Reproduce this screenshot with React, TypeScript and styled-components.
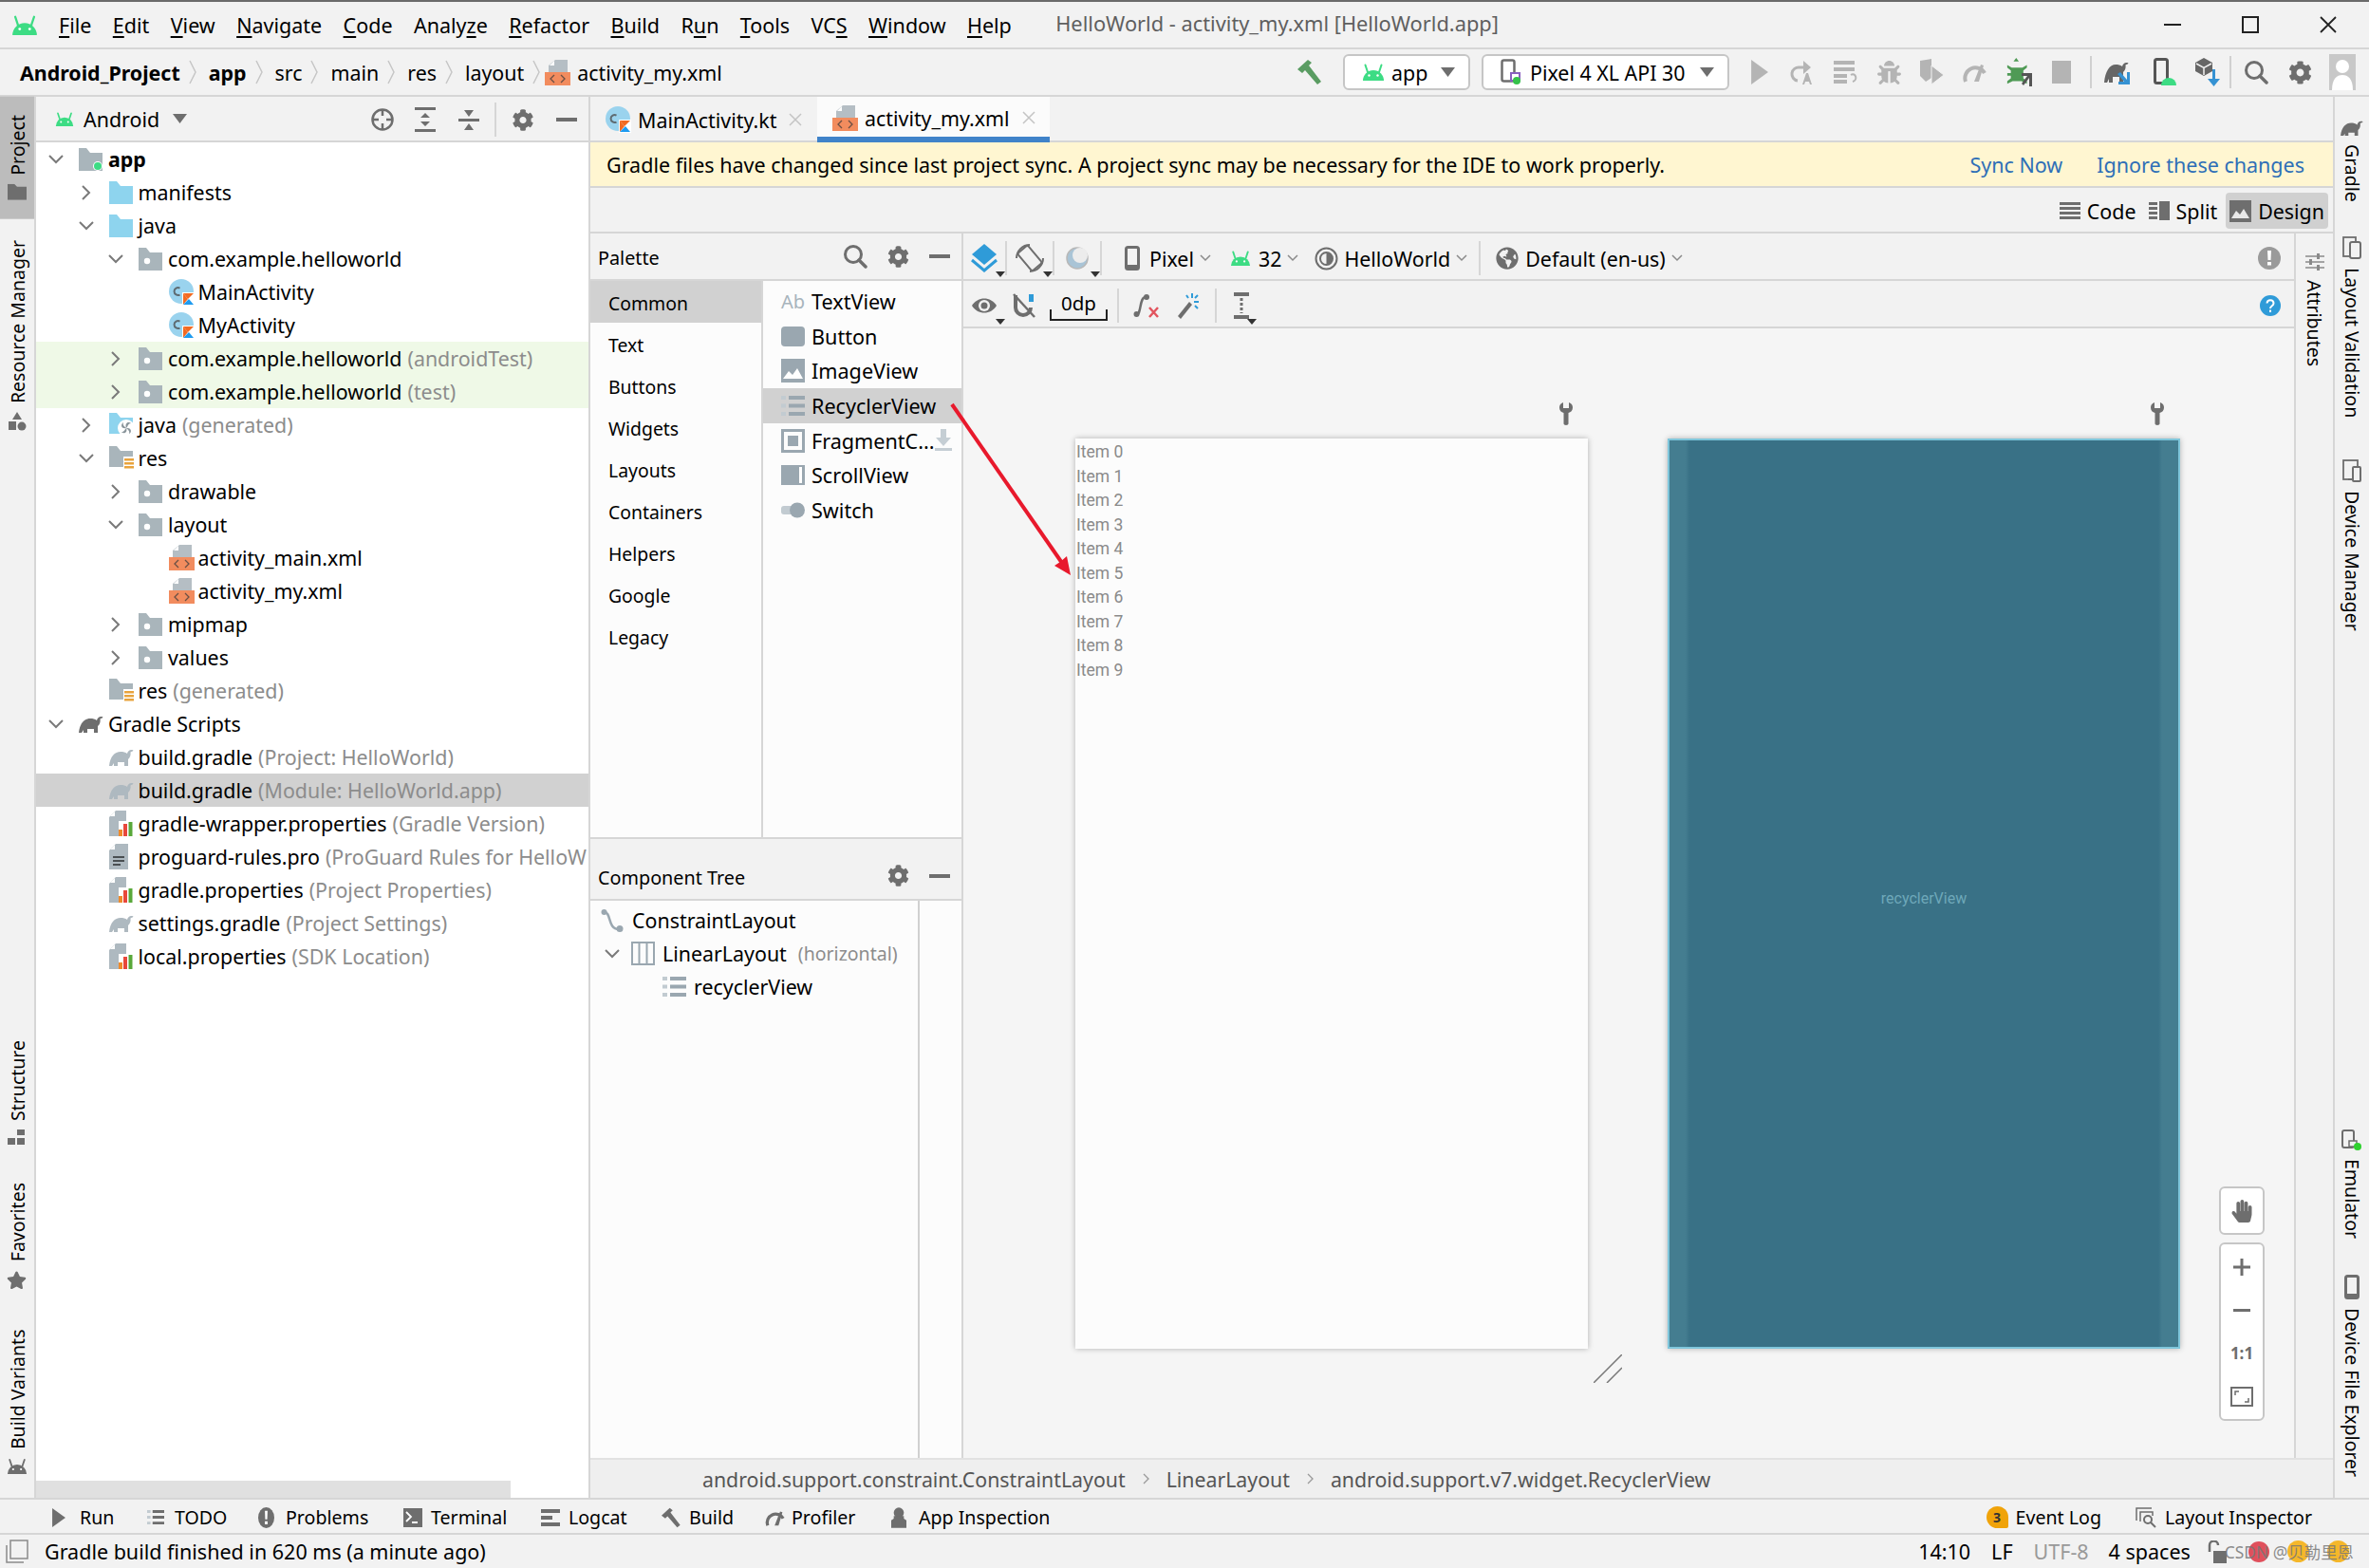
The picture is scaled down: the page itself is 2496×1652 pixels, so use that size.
import React from 'react';
import styled, { createGlobalStyle } from 'styled-components';
import { FaCog, FaStar, FaHandPaper, FaGlobeAmericas, FaBug } from 'react-icons/fa';

const FONT = '"Noto Sans", "Noto Sans CJK SC", sans-serif';

const GlobalStyle = createGlobalStyle`
  html, body {
    margin: 0;
    padding: 0;
    width: 2496px;
    height: 1652px;
    overflow: hidden;
    background: #f2f2f2;
    font-family: ${FONT};
    color: #000;
  }
  * { box-sizing: border-box; }
  svg { display: block; flex: none; }
`;

const GRAY = '#6e6e6e';
const LIGHT = '#a9b5bb';
const GREEN = '#3ddc84';

type IconProps = { c?: string; s?: number };

const Android = ({ c = GREEN, s = 24 }: IconProps) => (
  <svg width={s} height={s * 0.75} viewBox="0 0 24 18">
    <path d="M1 18a11 11 0 0 1 22 0z" fill={c} />
    <path d="M6 9 3.5 1.5M18 9l2.500-7.500" stroke={c} strokeWidth="2" strokeLinecap="round" />
    <circle cx="7.500" cy="12.500" r="1.200" fill="#fff" />
    <circle cx="16.500" cy="12.500" r="1.200" fill="#fff" />
  </svg>
);

const Elephant = ({ c = GRAY, s = 26 }: IconProps) => (
  <svg width={s} height={s * 0.77} viewBox="0 0 26 20">
    <path d="M0 20C1 10 6 5 12 5c3 0 5 .5 7 2 .5-3 3.500-5 6.500-3.500-.5 1.500-2 1-3 2 .5 3-.5 6-2.500 7.500V20h-4v-4H9v4H5v-3l-2 3z" fill={c} />
  </svg>
);

const FolderIcon = ({ c = LIGHT, dot, w = 25 }: { c?: string; dot?: boolean; w?: number }) => (
  <svg width={w} height={w * 0.96} viewBox="0 0 25 24">
    <path d="M0 0h8l4 5h13v19H0z" fill={c} />
    {dot && <circle cx="9" cy="14" r="3.200" fill="#fff" />}
  </svg>
);

const ModuleFolder = () => (
  <svg width="25" height="24" viewBox="0 0 25 24">
    <path d="M0 0h8l4 5h13v19H0z" fill={LIGHT} />
    <circle cx="20" cy="19" r="5" fill="#fff" />
    <circle cx="20" cy="19" r="4" fill={GREEN} />
  </svg>
);

const ResFolder = () => (
  <svg width="27" height="25" viewBox="0 0 27 25">
    <path d="M0 0h8l4 5h13v17H0z" fill={LIGHT} />
    <path d="M15 11h12v14H15z" fill="#fff" />
    <path d="M16 13h10v2.500H16zM16 17h10v2.500H16zM16 21h10v2.500H16z" fill="#e8a33d" />
  </svg>
);

const GenFolder = () => (
  <svg width="27" height="25" viewBox="0 0 27 25">
    <path d="M0 0h8l4 5h13v17H0z" fill="#8ed4ee" />
    <circle cx="18" cy="16" r="9" fill="#fff" />
    <path d="M18 16c-2-6 3-7 5-5-3 0-3 3-5 5zm0 0c6-1 6 5 3 6 1-3-1-4-3-6zm0 0c2 6-4 6-5 4 3 0 3-2 5-4zm0 0c-6 1-6-4-3-6-1 3 1 4 3 6z" fill="#8a959b" />
  </svg>
);

const KotlinClass = () => (
  <svg width="27" height="28" viewBox="0 0 27 28">
    <circle cx="13" cy="13" r="13" fill="#9ad3ee" />
    <path d="M11.500 9.500a4 4 0 1 0 0 7" fill="none" stroke="#5e6b72" strokeWidth="2" />
    <path d="M14 14h13v14H14z" fill="#fff" />
    <path d="M15 15h11l-6 6z" fill="#f26a22" />
    <path d="M15 15v12l5-6z" fill="#f26a22" />
    <path d="M15 27l6-6 5 6z" fill="#1e9bf0" />
  </svg>
);

const XmlFile = () => (
  <svg width="27" height="27" viewBox="0 0 27 27">
    <path d="M11 0h13v14H4V6z" fill="#b5bec4" />
    <path d="M10 1v5H5z" fill="#fff" />
    <path d="M0 13h27v14H0z" fill="#f28c5e" />
    <path d="M10 16l-4 4 4 4M17 16l4 4-4 4" fill="none" stroke="#6b5045" strokeWidth="1.300" />
  </svg>
);

const PropsFile = () => (
  <svg width="25" height="27" viewBox="0 0 25 27">
    <path d="M7 0h11v27H0V7z" fill="#aeb9c0" />
    <path d="M6 1v5H1z" fill="#fff" />
    <path d="M10 11h15v16H10z" fill="#fff" />
    <path d="M10 20h4v7h-4z" fill="#ef8a2a" />
    <path d="M15 14h4v13h-4z" fill="#e8483b" />
    <path d="M20.500 12h4v15h-4z" fill="#59a83a" />
  </svg>
);

const TextFile = () => (
  <svg width="20" height="27" viewBox="0 0 20 27">
    <path d="M7 0h13v27H0V7z" fill="#aeb9c0" />
    <path d="M6 1v5H1z" fill="#fff" />
    <path d="M4 13h12v2H4zM4 17h12v2H4zM4 21h8v2H4z" fill="#4a4f52" />
  </svg>
);

const ListIcon = ({ c = '#9aa7b0', w = 25 }: IconProps & { w?: number }) => (
  <svg width={w} height={w * 0.86} viewBox="0 0 25 21.500">
    <path d="M0 0h5v4H0zM0 8.500h5v4H0zM0 17h5v4H0z" fill="#c2cbd1" />
    <path d="M8 0h17v4H8zM8 8.500h17v4H8zM8 17h17v4H8z" fill={c} />
  </svg>
);

const Gear = ({ s = 23 }: IconProps) => <FaCog size={s} color={GRAY} />;

const Search = () => (
  <svg width="26" height="26" viewBox="0 0 26 26">
    <circle cx="11" cy="11" r="8.500" fill="none" stroke={GRAY} strokeWidth="3" />
    <path d="M17 17l7 7" stroke={GRAY} strokeWidth="3.500" strokeLinecap="round" />
  </svg>
);

const Minus = () => (
  <svg width="22" height="4" viewBox="0 0 22 4">
    <path d="M0 0h22v4H0z" fill={GRAY} />
  </svg>
);

const Chevron = ({ down }: { down?: boolean }) => (
  <svg width="18" height="18" viewBox="0 0 18 18">
    <path d={down ? 'M2 5l7 7 7-7' : 'M5 2l7 7-7 7'} fill="none" stroke="#7a7a7a" strokeWidth="2" />
  </svg>
);

const SmallChevron = () => (
  <svg width="12" height="8" viewBox="0 0 12 8">
    <path d="M1 1l5 5 5-5" fill="none" stroke="#8a8a8a" strokeWidth="1.500" />
  </svg>
);

const ComboCaret = () => (
  <svg width="15" height="10" viewBox="0 0 15 10">
    <path d="M0 0h15l-7.500 10z" fill={GRAY} />
  </svg>
);

const Crumb = () => (
  <svg width="9" height="26" viewBox="0 0 9 26">
    <path d="M1 1l6 12-6 12" fill="none" stroke="#c6c6c6" strokeWidth="1.500" />
  </svg>
);

const Hammer = () => (
  <svg width="28" height="26" viewBox="0 0 28 26">
    <path d="M0 10 11 0l4 3-3 3 13 17-4 3L8 11l-3 3z" fill="#5a9c62" />
  </svg>
);

const PhoneIcon = ({ c = GRAY }: IconProps) => (
  <svg width="16" height="26" viewBox="0 0 16 26">
    <rect x="1.500" y="1.500" width="13" height="23" rx="2" fill="none" stroke={c} strokeWidth="3" />
    <path d="M1 20h14v5H1z" fill={c} />
  </svg>
);

const Warn = ({ c, w = 24, h = 24 }: { c: string; w?: number; h?: number }) => (
  <svg width={w} height={h} viewBox="0 0 24 24" preserveAspectRatio="none">
    <circle cx="12" cy="12" r="12" fill={c} />
    <path d="M10 4h4l-.5 10h-3zM10 16h4v3.500h-4z" fill="#fff" />
  </svg>
);

const Help = () => (
  <svg width="22" height="22" viewBox="0 0 22 22">
    <circle cx="11" cy="11" r="11" fill="#2f9bd8" />
    <path d="M7.500 8.500C8 4 14.500 4.500 14.500 8.500c0 3-3.500 2.500-3.500 5.500" fill="none" stroke="#fff" strokeWidth="2" />
    <path d="M10 15.500h2v2.500h-2z" fill="#fff" />
  </svg>
);

const Wrench = () => (
  <svg width="14" height="24" viewBox="0 0 14 24">
    <path d="M4 0v6h6V0c3 1 4 3 4 5.500 0 3-2 5-4.500 5.500v11.500a2.500 1.500 0 0 1-5 0V11C2 10.500 0 8.500 0 5.500 0 3 1 1 4 0z" fill={GRAY} />
  </svg>
);

const TopBar = styled.div`
  height: 52px;
  display: flex;
  align-items: center;
  border-top: 2px solid #6b6b6b;
  border-bottom: 2px solid #d6d6d6;
  background: #f2f2f2;
`;

const AppLogo = styled.div`
  width: 62px;
  padding-left: 12px;
`;

const MenuItem = styled.span`
  font-size: 21.500px;
  margin-right: 22.400px;
  u {
    text-underline-offset: 3px;
  }
`;

const WindowTitle = styled.span`
  font-size: 21.800px;
  color: #5f5f5f;
  margin-left: 24px;
  margin-bottom: 3px;
`;

const WindowButtons = styled.div`
  margin-left: auto;
  display: flex;
  align-items: center;
  gap: 64px;
  padding-right: 34px;
`;

const NavBar = styled.div`
  height: 50px;
  display: flex;
  align-items: center;
  border-bottom: 2px solid #d6d6d6;
  padding: 0 3px 0 21px;
  font-size: 21.400px;
`;

const NavCrumb = styled.span<{ $bold?: boolean }>`
  font-weight: ${(p) => (p.$bold ? 700 : 400)};
`;

const NavSep = styled.span`
  margin: 0 12px 0 9px;
`;

const NavFile = styled.span`
  margin-left: 7px;
`;

const NavIconSlot = styled.div`
  margin-left: -8px;
`;

const NavRight = styled.div`
  margin-left: auto;
  display: flex;
  align-items: center;
`;

const Combo = styled.div<{ $w: number; $mr: number }>`
  width: ${(p) => p.$w}px;
  height: 38px;
  margin-right: ${(p) => p.$mr}px;
  display: flex;
  align-items: center;
  background: #fff;
  border: 2px solid #c6c6c6;
  border-radius: 6px;
  padding: 0 14px 0 18px;
  font-size: 21.400px;
  gap: 7px;
  svg:last-child {
    margin-left: auto;
  }
`;

const HammerSlot = styled.div`
  margin-right: 20px;
`;

const ActionSlot = styled.div<{ $w?: number }>`
  width: ${(p) => p.$w ?? 45.500}px;
  display: flex;
  justify-content: center;
  align-items: center;
`;

const ActionSep = styled.div<{ $ml?: number }>`
  width: 2px;
  height: 34px;
  margin-left: ${(p) => p.$ml ?? 0}px;
  background: #d0d0d0;
`;

const Middle = styled.div`
  height: 1476px;
  display: flex;
`;

const StripeLeft = styled.div`
  width: 38px;
  display: flex;
  flex-direction: column;
  border-right: 2px solid #d6d6d6;
  background: #f2f2f2;
`;

const StripeRight = styled.div`
  width: 38px;
  display: flex;
  flex-direction: column;
  border-left: 2px solid #d6d6d6;
  background: #f2f2f2;
`;

const StripeButton = styled.div<{ $active?: boolean; $flip?: boolean; $mt?: number; $pad?: string }>`
  writing-mode: vertical-rl;
  transform: ${(p) => (p.$flip ? 'rotate(180deg)' : 'none')};
  display: flex;
  align-items: center;
  gap: 9px;
  width: 36px;
  margin-top: ${(p) => p.$mt ?? 0}px;
  padding: ${(p) => p.$pad ?? '0'};
  font-size: 19.500px;
  white-space: nowrap;
  background: ${(p) => (p.$active ? '#bcbcbc' : 'transparent')};
`;

const StripeIcon = styled.div<{ $flip?: boolean }>`
  transform: ${(p) => (p.$flip ? 'rotate(180deg)' : 'none')};
`;

const ProjectPanel = styled.div`
  width: 582px;
  display: flex;
  flex-direction: column;
  position: relative;
  background: #fff;
  overflow: hidden;
`;

const PanelHeader = styled.div`
  height: 48px;
  display: flex;
  align-items: center;
  background: #f2f2f2;
  border-bottom: 2px solid #d6d6d6;
  font-size: 21.400px;
  flex: none;
`;

const HeaderLabel = styled.span<{ $ml?: number }>`
  margin-left: ${(p) => p.$ml ?? 10}px;
`;

const HeaderIcon = styled.div<{ $x: number }>`
  position: absolute;
  left: ${(p) => p.$x}px;
  top: 12px;
  height: 24px;
  display: flex;
  align-items: center;
  transform: translateX(-50%);
`;

const Row = styled.div<{ $level: number; $bg?: string }>`
  height: 35px;
  display: flex;
  align-items: center;
  padding-left: ${(p) => 9 + p.$level * 31.5}px;
  background: ${(p) => p.$bg ?? 'transparent'};
  font-size: 21.400px;
  white-space: nowrap;
  flex: none;
`;

const ChevronSlot = styled.div`
  width: 36px;
  padding-left: 3px;
  flex: none;
`;

const IconSlot = styled.div`
  width: 31px;
  display: flex;
  align-items: center;
  flex: none;
`;

const Detail = styled.span<{ $c?: string }>`
  color: ${(p) => p.$c ?? '#8c8c8c'};
  margin-left: 6px;
`;

const ProjectScroll = styled.div`
  position: absolute;
  left: 0;
  bottom: 0;
  width: 500px;
  height: 18px;
  background: #e0e0e0;
`;

const Editor = styled.div`
  flex: 1;
  display: flex;
  flex-direction: column;
  border-left: 2px solid #d6d6d6;
  min-width: 0;
`;

const TabBar = styled.div`
  height: 48px;
  display: flex;
  border-bottom: 2px solid #d6d6d6;
  font-size: 21.400px;
  flex: none;
`;

const Tab = styled.div<{ $active?: boolean; $w: number }>`
  width: ${(p) => p.$w}px;
  display: flex;
  align-items: center;
  height: 48px;
  padding: ${(p) => (p.$active ? '2px' : '0')} 0 0 16px;
  gap: 7px;
  background: ${(p) => (p.$active ? '#fbfbfb' : 'transparent')};
  border-bottom: ${(p) => (p.$active ? '6px solid #4083c9' : 'none')};
`;

const TabClose = styled.span`
  margin-left: 6px;
  display: flex;
`;

const Banner = styled.div`
  height: 48px;
  display: flex;
  align-items: center;
  background: #fff6d1;
  border-bottom: 2px solid #d6d6d6;
  padding: 0 30px 0 17px;
  font-size: 21.500px;
  flex: none;
`;

const BannerLink = styled.span<{ $first?: boolean }>`
  color: #2e6fb7;
  margin-left: ${(p) => (p.$first ? 'auto' : '36px')};
`;

const ModeBar = styled.div`
  height: 48px;
  display: flex;
  align-items: center;
  justify-content: flex-end;
  border-bottom: 2px solid #d6d6d6;
  padding: 2px 5px 0 0;
  font-size: 21.400px;
  flex: none;
`;

const ModeButton = styled.div<{ $active?: boolean }>`
  display: flex;
  align-items: center;
  height: 38px;
  gap: 7px;
  padding: 0 4px;
  margin-left: 5px;
  border-radius: 4px;
  background: ${(p) => (p.$active ? '#d0d0d0' : 'transparent')};
`;

const Body = styled.div`
  flex: 1;
  display: flex;
  min-height: 0;
`;

const SideColumn = styled.div`
  width: 393px;
  display: flex;
  flex-direction: column;
  border-right: 2px solid #d6d6d6;
  flex: none;
`;

const SideHeader = styled.div<{ $h: number }>`
  height: ${(p) => p.$h}px;
  display: flex;
  align-items: center;
  padding: 3px 12px 0 8px;
  font-size: 19.800px;
  border-bottom: 2px solid #d6d6d6;
  flex: none;
`;

const SideTools = styled.div`
  margin-left: auto;
  display: flex;
  align-items: center;
  gap: 21px;
  margin-top: -3px;
`;

const PaletteBody = styled.div`
  height: 588px;
  display: flex;
  background: #fcfcfc;
  border-bottom: 2px solid #d6d6d6;
  flex: none;
`;

const Categories = styled.div`
  width: 182px;
  border-right: 2px solid #d6d6d6;
  font-size: 19.400px;
`;

const Category = styled.div<{ $active?: boolean }>`
  height: 44px;
  display: flex;
  align-items: center;
  padding: 2px 0 0 19px;
  background: ${(p) => (p.$active ? '#d1d1d1' : 'transparent')};
`;

const Widgets = styled.div`
  flex: 1;
  padding-top: 3px;
  font-size: 21.600px;
`;

const WidgetRow = styled.div<{ $active?: boolean }>`
  height: 36.700px;
  display: flex;
  align-items: center;
  padding-left: 19px;
  background: ${(p) => (p.$active ? '#d1d1d1' : 'transparent')};
`;

const WidgetIcon = styled.div`
  width: 32px;
  display: flex;
  align-items: center;
  color: #a8b4bc;
  font-size: 20px;
`;

const WidgetExtra = styled.div`
  margin-left: auto;
  margin-right: 10px;
`;

const PanelGap = styled.div`
  height: 14px;
  flex: none;
`;

const ComponentBody = styled.div`
  flex: 1;
  display: flex;
  background: #fcfcfc;
`;

const ComponentList = styled.div`
  width: 347px;
  padding-top: 3px;
  border-right: 2px solid #d0d0d0;
  font-size: 21.400px;
  white-space: nowrap;
`;

const CompRow = styled.div<{ $pad: number }>`
  height: 35px;
  display: flex;
  align-items: center;
  padding-left: ${(p) => p.$pad}px;
`;

const CompIcon = styled.div`
  width: 33px;
  display: flex;
  align-items: center;
`;

const CompChevron = styled.div`
  width: 29px;
`;

const CompDetail = styled.span`
  color: #8c8c8c;
  margin-left: 12px;
  font-size: 19.500px;
`;

const Surface = styled.div`
  flex: 1;
  display: flex;
  flex-direction: column;
  min-width: 0;
`;

const DesignToolbar = styled.div`
  height: 50px;
  display: flex;
  align-items: center;
  padding-top: 4px;
  border-bottom: 2px solid #d6d6d6;
  font-size: 21.400px;
  flex: none;
`;

const ToolSlot = styled.div<{ $w: number; $ml?: number }>`
  position: relative;
  width: ${(p) => p.$w}px;
  margin-left: ${(p) => p.$ml ?? 0}px;
  height: 34px;
  display: flex;
  align-items: center;
  justify-content: center;
  flex: none;
`;

const MiniCaret = styled.span`
  position: absolute;
  right: 0;
  bottom: -3px;
  width: 0;
  height: 0;
  border-left: 5px solid transparent;
  border-right: 5px solid transparent;
  border-top: 6px solid #333;
`;

const ToolSep = styled.div`
  width: 2px;
  height: 36px;
  background: #d6d6d6;
  flex: none;
`;

const ToolLabel = styled.span<{ $ml?: number }>`
  margin-left: ${(p) => p.$ml ?? 6}px;
  white-space: nowrap;
`;

const ToolChevron = styled.div`
  margin-left: 6px;
`;

const ToolEnd = styled.div`
  margin-left: auto;
  margin-right: 14px;
  display: flex;
`;

const ZeroDp = styled.div`
  position: relative;
  width: 61px;
  height: 34px;
  margin-left: 12px;
  display: flex;
  justify-content: center;
  line-height: 29px;
  font-size: 20.500px;
  flex: none;
  &::after {
    content: '';
    position: absolute;
    left: 0;
    right: 0;
    bottom: 1px;
    height: 10px;
    border-left: 2px solid #222;
    border-right: 2px solid #222;
    border-bottom: 2px solid #222;
  }
`;

const Canvas = styled.div`
  position: relative;
  flex: 1;
  background: #f5f5f5;
`;

const DeviceFrame = styled.div<{ $x: number }>`
  position: absolute;
  left: ${(p) => p.$x}px;
  top: 116px;
  width: 540px;
  height: 959px;
`;

const DesignDevice = styled(DeviceFrame)`
  background: #fcfcfc;
  box-shadow: 0 0 6px rgba(0, 0, 0, 0.28);
  padding-top: 2px;
`;

const ListItem = styled.div`
  height: 25.500px;
  line-height: 25.500px;
  padding-left: 1px;
  font-family: Roboto, sans-serif;
  font-size: 17.500px;
  color: #8a8a8a;
`;

const BlueprintDevice = styled(DeviceFrame)`
  display: flex;
  align-items: center;
  justify-content: center;
  padding-top: 10px;
  background: linear-gradient(
    90deg,
    #447d90 0 17px,
    #397186 21px calc(100% - 21px),
    #447d90 calc(100% - 17px)
  );
  border: 2px solid #7fc6db;
  box-shadow: 0 0 6px rgba(0, 0, 0, 0.28);
  font-family: Roboto, sans-serif;
  font-size: 16px;
  color: #6ea8b9;
`;

const DeviceWrench = styled.div<{ $x: number }>`
  position: absolute;
  left: ${(p) => p.$x}px;
  top: 78px;
`;

const ResizeHandle = styled.div`
  position: absolute;
  left: 664px;
  top: 1081px;
`;

const FloatBox = styled.div<{ $top: number; $h: number }>`
  position: absolute;
  left: 1323px;
  top: ${(p) => p.$top}px;
  width: 48px;
  height: ${(p) => p.$h}px;
  display: flex;
  flex-direction: column;
  align-items: center;
  justify-content: center;
  background: #fff;
  border: 2px solid #c6c6c6;
  border-radius: 6px;
`;

const FloatItem = styled.div`
  height: 45.500px;
  display: flex;
  align-items: center;
  justify-content: center;
`;

const OneToOne = styled.span`
  font-size: 17px;
  font-weight: 700;
  color: ${GRAY};
`;

const AttrStripe = styled.div`
  width: 41px;
  flex: none;
  padding-top: 20px;
  border-left: 2px solid #d6d6d6;
  display: flex;
  flex-direction: column;
  align-items: center;
`;

const Breadcrumbs = styled.div`
  height: 42px;
  display: flex;
  align-items: center;
  padding-left: 118px;
  gap: 18px;
  background: #efefef;
  border-top: 2px solid #e2e2e2;
  color: #555;
  font-size: 21.300px;
  flex: none;
`;

const BottomTools = styled.div`
  height: 39px;
  display: flex;
  align-items: center;
  padding: 2px 0 0 48px;
  border-top: 2px solid #d6d6d6;
  border-bottom: 2px solid #d6d6d6;
  font-size: 19.600px;
`;

const ToolTab = styled.div<{ $w: number }>`
  width: ${(p) => p.$w}px;
  display: flex;
  align-items: center;
  padding-left: 7px;
  flex: none;
`;

const ToolTabIcon = styled.div`
  width: 29px;
  display: flex;
  align-items: center;
`;

const BottomRight = styled.div`
  margin-left: auto;
  padding-right: 60px;
  display: flex;
  align-items: center;
`;

const EventBadge = styled.span`
  width: 23px;
  height: 23px;
  margin-right: 8px;
  display: flex;
  align-items: center;
  justify-content: center;
  border-radius: 50% 50% 2px 50%;
  background: #f0a30a;
  color: #333;
  font-size: 14px;
  font-weight: 700;
`;

const InspectorLabel = styled.span`
  margin-left: 9px;
`;

const InspectorIcon = styled.div`
  margin-left: 36px;
`;

const StatusBar = styled.div`
  height: 35px;
  display: flex;
  align-items: center;
  padding-left: 5px;
  font-size: 21.500px;
`;

const StatusMessage = styled.span`
  margin-left: 17px;
`;

const StatusRight = styled.div`
  margin-left: auto;
  display: flex;
  align-items: center;
  padding-right: 16px;
`;

const StatusField = styled.span<{ $c?: string; $mr: number }>`
  color: ${(p) => p.$c ?? '#000'};
  margin-right: ${(p) => p.$mr}px;
`;

const Watermark = styled.span`
  position: relative;
  display: flex;
  align-items: center;
  margin-left: -2px;
  font-size: 17.400px;
  color: rgba(120, 120, 120, 0.85);
  white-space: nowrap;
`;

const RedDot = styled.span`
  position: absolute;
  left: 25px;
  top: 2px;
  width: 22px;
  height: 22px;
  border-radius: 50%;
  background: #e0505c;
  z-index: -1;
`;

const Emoji = styled.span<{ $x: number }>`
  position: absolute;
  left: ${(p) => p.$x}px;
  top: 1px;
  width: 23px;
  height: 23px;
  border-radius: 50%;
  background: #f5b72a;
  z-index: -1;
`;

const RedArrow = styled.svg`
  position: absolute;
  left: 1000px;
  top: 420px;
`;

const Page = styled.div`
  position: relative;
  width: 2496px;
  height: 1652px;
  overflow: hidden;
  isolation: isolate;
  background: #f2f2f2;
`;

const menus: [string, number][] = [
  ['File', 0], ['Edit', 0], ['View', 0], ['Navigate', 0], ['Code', 0], ['Analyze', 5], ['Refactor', 0],
  ['Build', 0], ['Run', 1], ['Tools', 0], ['VCS', 2], ['Window', 0], ['Help', 0],
];

type TreeItem = {
  level: number;
  open?: boolean;
  icon: React.ReactNode;
  label: string;
  detail?: string;
  bold?: boolean;
  bg?: string;
};

const folder = <FolderIcon dot />;
const GREEN_ROW = '#eff9e7';
const gradle = <Elephant c="#aeb9c0" />;

const tree: TreeItem[] = [
  { level: 0, open: true, icon: <ModuleFolder />, label: 'app', bold: true },
  { level: 1, open: false, icon: <FolderIcon c="#8ed4ee" />, label: 'manifests' },
  { level: 1, open: true, icon: <FolderIcon c="#8ed4ee" />, label: 'java' },
  { level: 2, open: true, icon: folder, label: 'com.example.helloworld' },
  { level: 3, icon: <KotlinClass />, label: 'MainActivity' },
  { level: 3, icon: <KotlinClass />, label: 'MyActivity' },
  { level: 2, open: false, icon: folder, label: 'com.example.helloworld', detail: '(androidTest)', bg: GREEN_ROW },
  { level: 2, open: false, icon: folder, label: 'com.example.helloworld', detail: '(test)', bg: GREEN_ROW },
  { level: 1, open: false, icon: <GenFolder />, label: 'java', detail: '(generated)' },
  { level: 1, open: true, icon: <ResFolder />, label: 'res' },
  { level: 2, open: false, icon: folder, label: 'drawable' },
  { level: 2, open: true, icon: folder, label: 'layout' },
  { level: 3, icon: <XmlFile />, label: 'activity_main.xml' },
  { level: 3, icon: <XmlFile />, label: 'activity_my.xml' },
  { level: 2, open: false, icon: folder, label: 'mipmap' },
  { level: 2, open: false, icon: folder, label: 'values' },
  { level: 1, icon: <ResFolder />, label: 'res', detail: '(generated)' },
  { level: 0, open: true, icon: <Elephant />, label: 'Gradle Scripts' },
  { level: 1, icon: gradle, label: 'build.gradle', detail: '(Project: HelloWorld)' },
  { level: 1, icon: gradle, label: 'build.gradle', detail: '(Module: HelloWorld.app)', bg: '#d1d1d1' },
  { level: 1, icon: <PropsFile />, label: 'gradle-wrapper.properties', detail: '(Gradle Version)' },
  { level: 1, icon: <TextFile />, label: 'proguard-rules.pro', detail: '(ProGuard Rules for HelloW' },
  { level: 1, icon: <PropsFile />, label: 'gradle.properties', detail: '(Project Properties)' },
  { level: 1, icon: gradle, label: 'settings.gradle', detail: '(Project Settings)' },
  { level: 1, icon: <PropsFile />, label: 'local.properties', detail: '(SDK Location)' },
];

const categories = ['Common', 'Text', 'Buttons', 'Widgets', 'Layouts', 'Containers', 'Helpers', 'Google', 'Legacy'];

const BoxIcon = ({ children }: { children: React.ReactNode }) => (
  <svg width="25" height="25" viewBox="0 0 25 25">{children}</svg>
);

const widgets: { label: string; icon: React.ReactNode; active?: boolean; extra?: boolean }[] = [
  { label: 'TextView', icon: 'Ab' },
  { label: 'Button', icon: <BoxIcon><rect y="2" width="25" height="21" rx="4" fill="#9aa7b0" /></BoxIcon> },
  {
    label: 'ImageView',
    icon: (
      <BoxIcon>
        <rect width="25" height="25" fill="#9aa7b0" />
        <path d="M2 21l6-8 4 4 5-7 6 11z" fill="#fff" />
      </BoxIcon>
    ),
  },
  { label: 'RecyclerView', icon: <ListIcon />, active: true },
  {
    label: 'FragmentC...',
    extra: true,
    icon: (
      <BoxIcon>
        <rect x="1.500" y="1.500" width="22" height="22" fill="none" stroke="#9aa7b0" strokeWidth="3" />
        <rect x="7" y="7" width="11" height="11" fill="#9aa7b0" />
      </BoxIcon>
    ),
  },
  {
    label: 'ScrollView',
    icon: (
      <BoxIcon>
        <rect y="2" width="25" height="21" fill="#9aa7b0" />
        <rect x="19" y="4" width="3" height="17" fill="#fff" />
      </BoxIcon>
    ),
  },
  {
    label: 'Switch',
    icon: (
      <BoxIcon>
        <rect y="8" width="14" height="9" rx="3" fill="#c2cbd1" />
        <circle cx="17" cy="12.500" r="8" fill="#9aa7b0" />
      </BoxIcon>
    ),
  },
];

const RunIcon = ({ c = '#b4b4b4', s = 26 }: IconProps) => (
  <svg width={s * 0.7} height={s} viewBox="0 0 18 26">
    <path d="M0 0l18 13L0 26z" fill={c} />
  </svg>
);

export default function App() {
  return (
    <Page>
      <GlobalStyle />
      <TopBar>
        <AppLogo><Android s={28} /></AppLogo>
        {menus.map(([name, i]) => (
          <MenuItem key={name}>
            {name.slice(0, i)}
            <u>{name[i]}</u>
            {name.slice(i + 1)}
          </MenuItem>
        ))}
        <WindowTitle>HelloWorld - activity_my.xml [HelloWorld.app]</WindowTitle>
        <WindowButtons>
          <svg width="18" height="2" viewBox="0 0 18 2"><path d="M0 0h18v2H0z" fill="#222" /></svg>
          <svg width="18" height="18" viewBox="0 0 18 18"><rect x="1" y="1" width="16" height="16" fill="none" stroke="#222" strokeWidth="2" /></svg>
          <svg width="18" height="18" viewBox="0 0 18 18"><path d="M1 1l16 16M17 1 1 17" stroke="#222" strokeWidth="1.800" /></svg>
        </WindowButtons>
      </TopBar>

      <NavBar>
        <NavCrumb $bold>Android_Project</NavCrumb><NavSep><Crumb /></NavSep>
        <NavCrumb $bold>app</NavCrumb><NavSep><Crumb /></NavSep>
        <NavCrumb>src</NavCrumb><NavSep><Crumb /></NavSep>
        <NavCrumb>main</NavCrumb><NavSep><Crumb /></NavSep>
        <NavCrumb>res</NavCrumb><NavSep><Crumb /></NavSep>
        <NavCrumb>layout</NavCrumb><NavSep><Crumb /></NavSep>
        <NavIconSlot><XmlFile /></NavIconSlot>
        <NavFile>activity_my.xml</NavFile>
        <NavRight>
          <HammerSlot><Hammer /></HammerSlot>
          <Combo $w={134} $mr={12}>
            <Android s={24} />
            app
            <ComboCaret />
          </Combo>
          <Combo $w={261} $mr={9}>
            <svg width="24" height="28" viewBox="0 0 24 28">
              <rect x="1.500" y="1.500" width="13" height="22" rx="2" fill="none" stroke={GRAY} strokeWidth="2.500" />
              <rect x="11" y="15" width="9" height="8" fill="#fff" stroke="#8a5fc0" strokeWidth="2" />
              <circle cx="17" cy="23" r="4" fill="#35c24a" />
            </svg>
            Pixel 4 XL API 30
            <ComboCaret />
          </Combo>
          <ActionSlot><RunIcon /></ActionSlot>
          <ActionSlot>
            <svg width="26" height="26" viewBox="0 0 26 26">
              <path d="M18 8H10a7 7 0 0 0-2 14" fill="none" stroke="#b4b4b4" strokeWidth="3" />
              <path d="M14 1l8 7-8 7z" fill="#b4b4b4" />
              <path d="M13 26l4-12h2l4 12h-2l-1-3h-4l-1 3z" fill="#b4b4b4" />
            </svg>
          </ActionSlot>
          <ActionSlot>
            <svg width="26" height="24" viewBox="0 0 26 24">
              <path d="M0 0h22v4H0zM0 7h22v4H0zM0 14h14v4H0zM0 20h14v4H0z" fill="#b4b4b4" />
              <path d="M18 15c5-3 8 5 2 7" fill="none" stroke="#b4b4b4" strokeWidth="2" />
            </svg>
          </ActionSlot>
          <ActionSlot><FaBug size={25} color="#b4b4b4" /></ActionSlot>
          <ActionSlot>
            <svg width="26" height="28" viewBox="0 0 26 28">
              <path d="M0 2 12 0v20l-6 4-6-6z" fill="#b4b4b4" />
              <path d="M12 7l13 10-13 10z" fill="#b4b4b4" stroke="#f2f2f2" strokeWidth="1" />
            </svg>
          </ActionSlot>
          <ActionSlot>
            <svg width="26" height="22" viewBox="0 0 26 22">
              <path d="M3 21a11 11 0 0 1 20-9" fill="none" stroke="#b4b4b4" strokeWidth="4" />
              <path d="M12 21l7-18 3 1-5 17z" fill="#b4b4b4" />
            </svg>
          </ActionSlot>
          <ActionSlot>
            <svg width="28" height="30" viewBox="0 0 28 30">
              <g transform="scale(.94)"><path d="M12 0l3 4h-6zM2 8l5 3h12l5-3v3l-4 3v3h4v3h-4v3l4 3v3l-6-3H8l-6 3v-3l4-3v-3H2v-3h4v-3l-4-3z" fill="#4f9a55" /></g>
              <path d="M17 16h11v14h-3v-9l-6 8-2-2 6-8h-6z" fill="#555" />
            </svg>
          </ActionSlot>
          <ActionSlot>
            <svg width="20" height="24" viewBox="0 0 20 24"><path d="M0 0h20v24H0z" fill="#b4b4b4" /></svg>
          </ActionSlot>
          <ActionSep $ml={7} />
          <ActionSlot $w={54}>
            <svg width="28" height="30" viewBox="0 0 28 30">
              <g transform="translate(0 2)"><path d="M0 24C1 12 6 5 12 5c3 0 5 .5 7 2 .5-3 3.500-5 6.500-3.500-.5 1.500-2 1-3 2 .5 3-.5 6-2.500 7.500V24h-4v-6H9v6H5v-4l-2 4z" fill="#666" /></g>
              <path d="M27 15v13H15v-3h6l-7-8 3-2 7 8v-8z" fill="#3592d3" />
            </svg>
          </ActionSlot>
          <ActionSlot>
            <svg width="24" height="30" viewBox="0 0 24 30">
              <rect x="1.500" y="1.500" width="13" height="25" rx="2" fill="none" stroke="#555" strokeWidth="3" />
              <path d="M8 29a8 8 0 0 1 16 0z" fill={GREEN} />
            </svg>
          </ActionSlot>
          <ActionSlot>
            <svg width="26" height="30" viewBox="0 0 26 30">
              <path d="M9 0l9 5v9l-9 5-9-5V5z" fill="#666" />
              <path d="M1 6l8 4.500L17 6M9 10.500V18" stroke="#f2f2f2" strokeWidth="1.500" fill="none" />
              <path d="M18 12h3v10h5l-6.500 8L13 22h5z" fill="#3592d3" />
            </svg>
          </ActionSlot>
          <ActionSep />
          <ActionSlot $w={52}><Search /></ActionSlot>
          <ActionSlot $w={40}><Gear s={25} /></ActionSlot>
          <ActionSlot $w={50}>
            <svg width="28" height="38" viewBox="0 0 28 38">
              <path d="M0 0h28v38H0z" fill="#c8c8c8" />
              <circle cx="14" cy="13" r="7" fill="#fff" />
              <path d="M3 38c0-12 5-16 11-16s11 4 11 16z" fill="#fff" />
            </svg>
          </ActionSlot>
        </NavRight>
      </NavBar>

      <Middle>
        <StripeLeft>
          <StripeButton $active $flip $pad="20px 0 19px">
            <StripeIcon $flip>
              <svg width="20" height="17" viewBox="0 0 20 17"><path d="M0 0h7l3 3h10v14H0z" fill={GRAY} /></svg>
            </StripeIcon>
            Project
          </StripeButton>
          <StripeButton $flip $mt={22}>
            <StripeIcon $flip>
              <svg width="20" height="20" viewBox="0 0 20 20">
                <path d="M10 0l5 8H5zM1 10h8v9H1z" fill={GRAY} />
                <circle cx="15" cy="15" r="4.500" fill={GRAY} />
              </svg>
            </StripeIcon>
            Resource Manager
          </StripeButton>
          <StripeButton $flip $mt={642}>
            <StripeIcon $flip>
              <svg width="19" height="16" viewBox="0 0 19 16"><path d="M10 0h8v6h-8zM0 9h8v7H0zM10 9h8v7h-8z" fill={GRAY} /></svg>
            </StripeIcon>
            Structure
          </StripeButton>
          <StripeButton $flip $mt={40}>
            <StripeIcon $flip><FaStar size={21} color={GRAY} /></StripeIcon>
            Favorites
          </StripeButton>
          <StripeButton $flip $mt={42}>
            <StripeIcon $flip><Android c={GRAY} s={22} /></StripeIcon>
            Build Variants
          </StripeButton>
        </StripeLeft>

        <ProjectPanel>
          <PanelHeader>
            <HeaderLabel $ml={20}><Android s={20} /></HeaderLabel>
            <HeaderLabel>Android</HeaderLabel>
            <HeaderLabel $ml={14}><ComboCaret /></HeaderLabel>
            <HeaderIcon $x={365}>
              <svg width="24" height="24" viewBox="0 0 24 24">
                <circle cx="12" cy="12" r="10.500" fill="none" stroke={GRAY} strokeWidth="2.500" />
                <path d="M12 1v7M12 16v7M1 12h7M16 12h7" stroke={GRAY} strokeWidth="2.500" />
              </svg>
            </HeaderIcon>
            <HeaderIcon $x={410}>
              <svg width="22" height="26" viewBox="0 0 22 26">
                <path d="M0 0h22v3H0zM0 23h22v3H0z" fill={GRAY} />
                <path d="M11 6l5 5H6zM11 20l-5-5h10z" fill={GRAY} />
              </svg>
            </HeaderIcon>
            <HeaderIcon $x={456}>
              <svg width="22" height="24" viewBox="0 0 22 24">
                <path d="M0 11h22v3H0z" fill={GRAY} />
                <path d="M11 9 6 2h10zM11 16l5 7H6z" fill={GRAY} />
              </svg>
            </HeaderIcon>
            <HeaderIcon $x={484}><ToolSep /></HeaderIcon>
            <HeaderIcon $x={513}><Gear /></HeaderIcon>
            <HeaderIcon $x={559}><Minus /></HeaderIcon>
          </PanelHeader>
          {tree.map((t, i) => (
            <Row key={i} $level={t.level} $bg={t.bg}>
              <ChevronSlot>{t.open !== undefined && <Chevron down={t.open} />}</ChevronSlot>
              <IconSlot>{t.icon}</IconSlot>
              {t.bold ? <NavCrumb $bold>{t.label}</NavCrumb> : t.label}
              {t.detail && <Detail>{t.detail}</Detail>}
            </Row>
          ))}
          <ProjectScroll />
        </ProjectPanel>

        <Editor>
          <TabBar>
            <Tab $w={239}>
              <KotlinClass />
              MainActivity.kt
              <TabClose>
                <svg width="14" height="14" viewBox="0 0 14 14"><path d="M1 1l12 12M13 1 1 13" stroke="#c4c4c4" strokeWidth="1.500" /></svg>
              </TabClose>
            </Tab>
            <Tab $w={245} $active>
              <XmlFile />
              activity_my.xml
              <TabClose>
                <svg width="14" height="14" viewBox="0 0 14 14"><path d="M1 1l12 12M13 1 1 13" stroke="#c4c4c4" strokeWidth="1.500" /></svg>
              </TabClose>
            </Tab>
          </TabBar>
          <Banner>
            Gradle files have changed since last project sync. A project sync may be necessary for the IDE to work properly.
            <BannerLink $first>Sync Now</BannerLink>
            <BannerLink>Ignore these changes</BannerLink>
          </Banner>
          <ModeBar>
            <ModeButton>
              <svg width="22" height="18" viewBox="0 0 22 18"><path d="M0 0h22v3H0zM0 5h22v3H0zM0 10h22v3H0zM0 15h22v3H0z" fill={GRAY} /></svg>
              Code
            </ModeButton>
            <ModeButton>
              <svg width="22" height="20" viewBox="0 0 22 20">
                <path d="M0 1h9v3H0zM0 6h9v3H0zM0 11h9v3H0zM0 16h9v3H0z" fill={GRAY} />
                <path d="M11 0h11v20H11z" fill={GRAY} />
              </svg>
              Split
            </ModeButton>
            <ModeButton $active>
              <svg width="23" height="23" viewBox="0 0 23 23">
                <rect width="23" height="23" fill={GRAY} />
                <path d="M2 19l5-8 4 4 4-6 6 10z" fill="#e8e8e8" />
              </svg>
              Design
            </ModeButton>
          </ModeBar>

          <Body>
            <SideColumn>
              <SideHeader $h={50}>
                Palette
                <SideTools>
                  <Search />
                  <Gear />
                  <Minus />
                </SideTools>
              </SideHeader>
              <PaletteBody>
                <Categories>
                  {categories.map((c, i) => (
                    <Category key={c} $active={i === 0}>{c}</Category>
                  ))}
                </Categories>
                <Widgets>
                  {widgets.map((w) => (
                    <WidgetRow key={w.label} $active={w.active}>
                      <WidgetIcon>{w.icon}</WidgetIcon>
                      {w.label}
                      {w.extra && (
                        <WidgetExtra>
                          <svg width="18" height="24" viewBox="0 0 18 24">
                            <path d="M6 0h6v9h5l-8 9-8-9h5zM0 20h18v3H0z" fill="#c5ced4" />
                          </svg>
                        </WidgetExtra>
                      )}
                    </WidgetRow>
                  ))}
                </Widgets>
              </PaletteBody>
              <PanelGap />
              <SideHeader $h={51}>
                Component Tree
                <SideTools>
                  <Gear />
                  <Minus />
                </SideTools>
              </SideHeader>
              <ComponentBody>
                <ComponentList>
                  <CompRow $pad={11}>
                    <CompIcon>
                      <svg width="25" height="24" viewBox="0 0 25 24">
                        <path d="M4 3c7 0 3 18 15 18" fill="none" stroke="#9aa7b0" strokeWidth="2.500" />
                        <circle cx="3.500" cy="3" r="3" fill="#9aa7b0" />
                        <circle cx="20" cy="20.500" r="3.500" fill="#9aa7b0" />
                      </svg>
                    </CompIcon>
                    ConstraintLayout
                  </CompRow>
                  <CompRow $pad={14}>
                    <CompChevron><Chevron down /></CompChevron>
                    <CompIcon>
                      <svg width="25" height="25" viewBox="0 0 25 25">
                        <path d="M1 1h23v23H1zM8.500 1v23M16.500 1v23" fill="none" stroke="#9aa7b0" strokeWidth="2" />
                      </svg>
                    </CompIcon>
                    LinearLayout
                    <CompDetail>(horizontal)</CompDetail>
                  </CompRow>
                  <CompRow $pad={76}>
                    <CompIcon><ListIcon /></CompIcon>
                    recyclerView
                  </CompRow>
                </ComponentList>
              </ComponentBody>
            </SideColumn>

            <Surface>
              <DesignToolbar>
                <ToolSlot $w={44}>
                  <svg width="30" height="30" viewBox="0 0 30 30">
                    <path d="M15 0l13 11-13 11L2 11z" fill="#2f9bd8" />
                    <path d="M2 17l13 11 13-11" fill="none" stroke="#2f9bd8" strokeWidth="3" />
                  </svg>
                  <MiniCaret />
                </ToolSlot>
                <ToolSep />
                <ToolSlot $w={48}>
                  <svg width="32" height="32" viewBox="0 0 32 32">
                    <rect x="9" y="4" width="14" height="24" rx="2" transform="rotate(-40 16 16)" fill="none" stroke={GRAY} strokeWidth="2" />
                    <path d="M2 16A14 14 0 0 1 16 2M30 16a14 14 0 0 1-14 14" fill="none" stroke={GRAY} strokeWidth="2" />
                  </svg>
                  <MiniCaret />
                </ToolSlot>
                <ToolSep />
                <ToolSlot $w={48}>
                  <svg width="24" height="26" viewBox="0 0 24 26">
                    <circle cx="12" cy="13" r="11" fill="#a9c4d6" stroke="#b8b8b8" strokeWidth="1.500" />
                    <circle cx="15" cy="10" r="8" fill="#ececec" />
                  </svg>
                  <MiniCaret />
                </ToolSlot>
                <ToolSep />
                <ToolSlot $w={24} $ml={20}><PhoneIcon /></ToolSlot>
                <ToolLabel>Pixel</ToolLabel>
                <ToolChevron><SmallChevron /></ToolChevron>
                <ToolSlot $w={26} $ml={18}><Android s={22} /></ToolSlot>
                <ToolLabel>32</ToolLabel>
                <ToolChevron><SmallChevron /></ToolChevron>
                <ToolSlot $w={26} $ml={16}>
                  <svg width="25" height="25" viewBox="0 0 25 25">
                    <circle cx="12.500" cy="12.500" r="11" fill="none" stroke={GRAY} strokeWidth="2" />
                    <circle cx="12.500" cy="12.500" r="6.500" fill="none" stroke={GRAY} strokeWidth="2" />
                    <path d="M12.500 6a6.500 6.500 0 0 1 0 13z" fill={GRAY} />
                  </svg>
                </ToolSlot>
                <ToolLabel>HelloWorld</ToolLabel>
                <ToolChevron><SmallChevron /></ToolChevron>
                <ToolSlot $w={2} $ml={12}><ToolSep /></ToolSlot>
                <ToolSlot $w={26} $ml={15}><FaGlobeAmericas size={24} color={GRAY} /></ToolSlot>
                <ToolLabel>Default (en-us)</ToolLabel>
                <ToolChevron><SmallChevron /></ToolChevron>
                <ToolEnd><Warn c="#9a9a9a" /></ToolEnd>
              </DesignToolbar>
              <DesignToolbar>
                <ToolSlot $w={44}>
                  <svg width="26" height="20" viewBox="0 0 26 20">
                    <path d="M0 10C6 0 20 0 26 10 20 20 6 20 0 10z" fill={GRAY} />
                    <circle cx="13" cy="10" r="6" fill="#f2f2f2" />
                    <circle cx="13" cy="10" r="3.500" fill={GRAY} />
                  </svg>
                  <MiniCaret />
                </ToolSlot>
                <ToolSlot $w={28} $ml={7}>
                  <svg width="26" height="28" viewBox="0 0 26 28">
                    <path d="M3 3v13a8 8 0 0 0 16 0" fill="none" stroke={GRAY} strokeWidth="4" />
                    <path d="M17 2h5v8h-5z" fill="#2f9bd8" />
                    <path d="M1 2l22 24" stroke={GRAY} strokeWidth="2.500" />
                  </svg>
                </ToolSlot>
                <ZeroDp>0dp</ZeroDp>
                <ToolSlot $w={2} $ml={10}><ToolSep /></ToolSlot>
                <ToolSlot $w={28} $ml={15}>
                  <svg width="28" height="26" viewBox="0 0 28 26">
                    <path d="M3 23c6 0 3-19 10-19" fill="none" stroke={GRAY} strokeWidth="2.500" />
                    <circle cx="3.500" cy="22" r="3" fill={GRAY} />
                    <circle cx="14" cy="4" r="3" fill={GRAY} />
                    <path d="M17 15l9 10M26 15l-9 10" stroke="#e2555f" strokeWidth="2.500" />
                  </svg>
                </ToolSlot>
                <ToolSlot $w={26} $ml={17}>
                  <svg width="26" height="28" viewBox="0 0 26 28">
                    <path d="M2 25 14 10l3 3L5 28z" fill={GRAY} />
                    <path d="M17 1v5M24 10h-5M23 3l-3 3M11 3l2 3M23 17l-3-3" stroke="#2f9bd8" strokeWidth="2" />
                  </svg>
                </ToolSlot>
                <ToolSlot $w={2} $ml={15}><ToolSep /></ToolSlot>
                <ToolSlot $w={32} $ml={10}>
                  <svg width="16" height="28" viewBox="0 0 16 28">
                    <path d="M0 0h16v4H0zM0 24h16v4H0z" fill={GRAY} />
                    <path d="M8 6v16" stroke={GRAY} strokeWidth="3" strokeDasharray="3 2" />
                  </svg>
                  <MiniCaret />
                </ToolSlot>
                <ToolEnd><Help /></ToolEnd>
              </DesignToolbar>
              <Canvas>
                <DesignDevice $x={118}>
                  {Array.from({ length: 10 }, (_, i) => (
                    <ListItem key={i}>Item {i}</ListItem>
                  ))}
                </DesignDevice>
                <BlueprintDevice $x={742}>recyclerView</BlueprintDevice>
                <DeviceWrench $x={628}><Wrench /></DeviceWrench>
                <DeviceWrench $x={1251}><Wrench /></DeviceWrench>
                <ResizeHandle>
                  <svg width="30" height="30" viewBox="0 0 30 30">
                    <path d="M0 30 30 0M14 30l16-16" stroke="#777" strokeWidth="1.500" />
                  </svg>
                </ResizeHandle>
                <FloatBox $top={904} $h={51}><FaHandPaper size={24} color={GRAY} /></FloatBox>
                <FloatBox $top={963} $h={188}>
                  <FloatItem>
                    <svg width="18" height="18" viewBox="0 0 18 18"><path d="M7.500 0h3v7.500H18v3h-7.500V18h-3v-7.500H0v-3h7.500z" fill={GRAY} /></svg>
                  </FloatItem>
                  <FloatItem>
                    <svg width="18" height="3" viewBox="0 0 18 3"><path d="M0 0h18v3H0z" fill={GRAY} /></svg>
                  </FloatItem>
                  <FloatItem><OneToOne>1:1</OneToOne></FloatItem>
                  <FloatItem>
                    <svg width="24" height="21" viewBox="0 0 24 21">
                      <rect x="1" y="1" width="22" height="19" fill="none" stroke={GRAY} strokeWidth="2" />
                      <path d="M5 9V5h4M19 12v4h-4" fill="none" stroke={GRAY} strokeWidth="1.500" />
                    </svg>
                  </FloatItem>
                </FloatBox>
              </Canvas>
            </Surface>

            <AttrStripe>
              <StripeButton>
                <StripeIcon>
                  <svg width="20" height="20" viewBox="0 0 20 20">
                    <path d="M0 4h20M0 10h20M0 16h20" stroke="#8a8a8a" strokeWidth="1.500" />
                    <path d="M12 1h3v6h-3zM4 7h3v6H4zM12 13h3v6h-3z" fill="#8a8a8a" />
                  </svg>
                </StripeIcon>
                Attributes
              </StripeButton>
            </AttrStripe>
          </Body>

          <Breadcrumbs>
            android.support.constraint.ConstraintLayout
            <svg width="7" height="12" viewBox="0 0 7 12"><path d="M1 1l5 5-5 5" fill="none" stroke="#999" strokeWidth="1.300" /></svg>
            LinearLayout
            <svg width="7" height="12" viewBox="0 0 7 12"><path d="M1 1l5 5-5 5" fill="none" stroke="#999" strokeWidth="1.300" /></svg>
            android.support.v7.widget.RecyclerView
          </Breadcrumbs>
        </Editor>

        <StripeRight>
          <StripeButton $mt={23}>
            <StripeIcon><Elephant s={24} /></StripeIcon>
            Gradle
          </StripeButton>
          <StripeButton $mt={36}>
            <StripeIcon>
              <svg width="20" height="24" viewBox="0 0 20 24">
                <rect x="1" y="1" width="13" height="20" fill="none" stroke={GRAY} strokeWidth="1.800" />
                <rect x="8" y="6" width="11" height="17" rx="2" fill="#f2f2f2" stroke={GRAY} strokeWidth="2" />
              </svg>
            </StripeIcon>
            Layout Validation
          </StripeButton>
          <StripeButton $mt={43}>
            <StripeIcon>
              <svg width="20" height="24" viewBox="0 0 20 24">
                <rect x="1" y="1" width="15" height="20" fill="none" stroke={GRAY} strokeWidth="1.800" />
                <path d="M6 21h13" stroke={GRAY} strokeWidth="2" />
                <rect x="11" y="8" width="8" height="15" rx="1" fill="#f2f2f2" stroke={GRAY} strokeWidth="2" />
              </svg>
            </StripeIcon>
            Device Manager
          </StripeButton>
          <StripeButton $mt={526}>
            <StripeIcon>
              <svg width="22" height="22" viewBox="0 0 22 22">
                <rect x="1" y="1" width="12" height="18" rx="2" fill="none" stroke={GRAY} strokeWidth="2" />
                <rect x="8" y="12" width="8" height="6" fill="#f2f2f2" stroke={GRAY} strokeWidth="1.500" />
                <circle cx="17" cy="18" r="4" fill="#2fd12f" />
              </svg>
            </StripeIcon>
            Emulator
          </StripeButton>
          <StripeButton $mt={38}>
            <StripeIcon><PhoneIcon /></StripeIcon>
            Device File Explorer
          </StripeButton>
        </StripeRight>
      </Middle>

      <BottomTools>
        <ToolTab $w={100}><ToolTabIcon><RunIcon c={GRAY} s={20} /></ToolTabIcon>Run</ToolTab>
        <ToolTab $w={117}><ToolTabIcon><ListIcon c={GRAY} w={18} /></ToolTabIcon>TODO</ToolTab>
        <ToolTab $w={153}><ToolTabIcon><Warn c={GRAY} w={17} h={22} /></ToolTabIcon>Problems</ToolTab>
        <ToolTab $w={145}>
          <ToolTabIcon>
            <svg width="20" height="20" viewBox="0 0 20 20">
              <path d="M0 0h20v20H0z" fill={GRAY} />
              <path d="M3 4l5 5-5 5M9 15h6" fill="none" stroke="#fff" strokeWidth="1.800" />
            </svg>
          </ToolTabIcon>
          Terminal
        </ToolTab>
        <ToolTab $w={127}>
          <ToolTabIcon>
            <svg width="20" height="18" viewBox="0 0 20 18"><path d="M0 0h20v4H0zM0 7h12v4H0zM0 14h20v4H0z" fill={GRAY} /></svg>
          </ToolTabIcon>
          Logcat
        </ToolTab>
        <ToolTab $w={108}>
          <ToolTabIcon><svg width="22" height="22" viewBox="0 0 28 26"><path d="M0 10 11 0l4 3-3 3 13 17-4 3L8 11l-3 3z" fill={GRAY} /></svg></ToolTabIcon>
          Build
        </ToolTab>
        <ToolTab $w={134}>
          <ToolTabIcon>
            <svg width="24" height="18" viewBox="0 0 26 22">
              <path d="M3 21a11 11 0 0 1 20-9" fill="none" stroke={GRAY} strokeWidth="4" />
              <path d="M12 21l7-18 3 1-5 17z" fill={GRAY} />
            </svg>
          </ToolTabIcon>
          Profiler
        </ToolTab>
        <ToolTab $w={180}>
          <ToolTabIcon>
            <svg width="16" height="24" viewBox="0 0 18 24">
              <circle cx="9" cy="6" r="6" fill={GRAY} />
              <path d="M3 10h12v3l3 2v9H0v-9l3-2z" fill={GRAY} />
            </svg>
          </ToolTabIcon>
          App Inspection
        </ToolTab>
        <BottomRight>
          <EventBadge>3</EventBadge>
          Event Log
          <InspectorIcon>
            <svg width="22" height="22" viewBox="0 0 22 22">
              <path d="M1 14V1h16" fill="none" stroke={GRAY} strokeWidth="1.500" />
              <path d="M5 15V5h13v4" fill="none" stroke={GRAY} strokeWidth="1.500" />
              <circle cx="13" cy="13" r="4" fill="none" stroke={GRAY} strokeWidth="2" />
              <path d="M16 16l5 5" stroke={GRAY} strokeWidth="2" />
            </svg>
          </InspectorIcon>
          <InspectorLabel>Layout Inspector</InspectorLabel>
        </BottomRight>
      </BottomTools>

      <StatusBar>
        <svg width="25" height="26" viewBox="0 0 25 26">
          <rect x="6" y="1" width="18" height="19" fill="none" stroke="#8a8a8a" strokeWidth="1.500" />
          <path d="M2 6v18h18" fill="none" stroke="#8a8a8a" strokeWidth="1.500" />
        </svg>
        <StatusMessage>Gradle build finished in 620 ms (a minute ago)</StatusMessage>
        <StatusRight>
          <StatusField $mr={22}>14:10</StatusField>
          <StatusField $mr={22}>LF</StatusField>
          <StatusField $mr={21} $c="#999">UTF-8</StatusField>
          <StatusField $mr={18}>4 spaces</StatusField>
          <svg width="20" height="24" viewBox="0 0 20 24">
            <path d="M2 12V5a4.500 4.500 0 0 1 9 0" fill="none" stroke={GRAY} strokeWidth="2.500" />
            <path d="M6 11h14v13H6z" fill={GRAY} />
          </svg>
          <Watermark>
            <RedDot />
            <Emoji $x={66} />
            <Emoji $x={108} />
            CSDN @贝勒里恩
          </Watermark>
        </StatusRight>
      </StatusBar>

      <RedArrow width="132" height="190" viewBox="0 0 132 190">
        <path d="M3 6 121 176" stroke="#e8192c" strokeWidth="4" />
        <path d="M128 186l-17-10 6-4 7-6z" fill="#e8192c" />
      </RedArrow>
    </Page>
  );
}
